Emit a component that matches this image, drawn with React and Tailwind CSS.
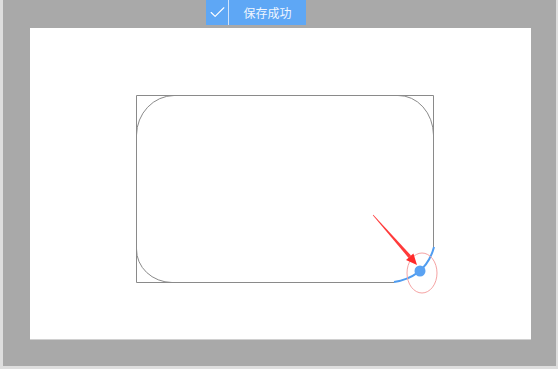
import { Check } from "lucide-react";

// rounded-rect corner editor preview, with the "saved" toast on top
const Toast = ({ text }) => (
  <div className="absolute left-[206px] top-0 flex h-[25px] w-[100px] bg-[#5ea7f5] text-white">
    <div className="flex w-[23px] items-center justify-center border-r border-[#cfe3fb]">
      <Check size={19} strokeWidth={1.4} />
    </div>
    <div className="flex flex-1 items-center justify-center text-[12px] font-['Noto_Sans_CJK_SC',sans-serif] text-[#eef5fe]">
      {text}
    </div>
  </div>
);

const Drawing = () => (
  <svg width="501" height="312" viewBox="0 0 501 312" className="block">
    <g fill="none" stroke="#8a8a8a" strokeWidth="1">
      {/* straight edges */}
      <path d="M106.5 67.5 H403.5 V219" />
      <path d="M106.5 67.5 V254.5 H364" />
      {/* corner arcs */}
      <path d="M106.5 107 A38 40 0 0 1 144 67.5" />
      <path d="M368 67.5 A35 40 0 0 1 403.5 107" />
      <path d="M106.5 221 A36 33 0 0 0 142 254.5" />
    </g>
    {/* active corner */}
    <path d="M364 254 Q396 249 404 219" fill="none" stroke="#4f9cf0" strokeWidth="2" />
    <circle cx="390" cy="243" r="5.5" fill="#5aa2f2" />
    <ellipse cx="392" cy="245" rx="15" ry="20" fill="none" stroke="#f5a3a3" strokeWidth="1" />
    {/* arrow */}
    <polygon points="342.8,187.2 343.3,186.7 381,227.6 378.6,229.9" fill="#ff3a3a" />
    <polygon points="387,237 376,232 383.4,225.4" fill="#ff2a2a" />
  </svg>
);

export default function App() {
  return (
    <div className="relative h-[369px] w-[558px] bg-[#dedede]">
      <div className="ml-[3px] h-[366px] w-[553px] bg-[#a9a9a9] pl-[27px] pt-[28px]">
        <div className="h-[312px] w-[501px] bg-white border-b border-[#d0d0d0]">
          <Drawing />
        </div>
      </div>
      <Toast text="保存成功" />
    </div>
  );
}
